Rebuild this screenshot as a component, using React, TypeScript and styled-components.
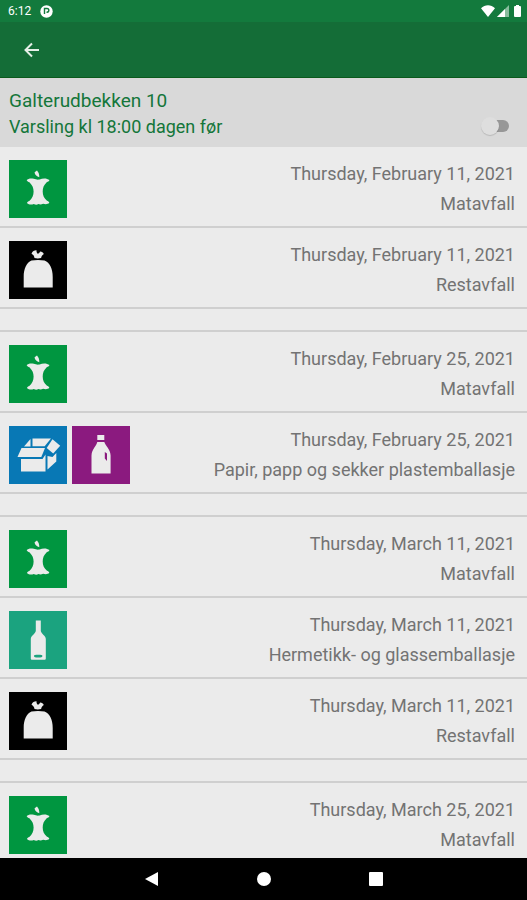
import * as React from 'react';
import styled, { createGlobalStyle } from 'styled-components';

type WasteKind = 'food' | 'rest' | 'paper' | 'plastic' | 'glass';

interface Pickup {
  date: string;
  label: string;
  kinds: WasteKind[];
}

const groups: Pickup[][] = [
  [
    { date: 'Thursday, February 11, 2021', label: 'Matavfall', kinds: ['food'] },
    { date: 'Thursday, February 11, 2021', label: 'Restavfall', kinds: ['rest'] },
  ],
  [
    { date: 'Thursday, February 25, 2021', label: 'Matavfall', kinds: ['food'] },
    {
      date: 'Thursday, February 25, 2021',
      label: 'Papir, papp og sekker plastemballasje',
      kinds: ['paper', 'plastic'],
    },
  ],
  [
    { date: 'Thursday, March 11, 2021', label: 'Matavfall', kinds: ['food'] },
    { date: 'Thursday, March 11, 2021', label: 'Hermetikk- og glassemballasje', kinds: ['glass'] },
    { date: 'Thursday, March 11, 2021', label: 'Restavfall', kinds: ['rest'] },
  ],
  [
    { date: 'Thursday, March 25, 2021', label: 'Matavfall', kinds: ['food'] },
  ],
];

const tileColors: Record<WasteKind, string> = {
  food: '#009640',
  rest: '#000000',
  paper: '#0878b5',
  plastic: '#8b1a7f',
  glass: '#1ba37f',
};

const GlobalStyle = createGlobalStyle`
  * {
    box-sizing: border-box;
  }
  body {
    margin: 0;
    font-family: Roboto, sans-serif;
    background: #ebebeb;
  }
`;

const Screen = styled.div`
  display: flex;
  flex-direction: column;
  height: 100vh;
  overflow: hidden;
`;

const StatusBar = styled.div`
  flex: none;
  display: flex;
  justify-content: space-between;
  align-items: center;
  height: 22px;
  padding: 0 4px 0 8px;
  background: #137a3d;
  color: #ffffff;
  font-size: 12px;
`;

const StatusGroup = styled.div<{ $gap: number }>`
  display: flex;
  align-items: center;
  gap: ${(p) => p.$gap}px;
`;

const AppBar = styled.header`
  flex: none;
  display: flex;
  align-items: center;
  height: 56px;
  padding: 0 20px;
  background: #146d37;
  border-bottom: 1px solid #0b5a1c;
`;

const IconButton = styled.button`
  display: flex;
  padding: 0;
  border: none;
  background: none;
  color: #e6efe8;
  cursor: pointer;
`;

const AddressBar = styled.section`
  flex: none;
  display: flex;
  justify-content: space-between;
  align-items: flex-end;
  padding: 10px 18px 8px 9px;
  background: #d9d9d9;
  color: #14763a;
`;

const Address = styled.h1`
  margin: 0;
  font-size: 19px;
  font-weight: 400;
  line-height: 26px;
`;

const AlertLabel = styled.label`
  display: block;
  font-size: 18px;
  line-height: 25px;
`;

const Toggle = styled.input`
  appearance: none;
  position: relative;
  width: 28px;
  height: 18px;
  margin: 0 0 4px;
  cursor: pointer;

  &::before {
    content: '';
    position: absolute;
    inset: 3px 0 3px 4px;
    border-radius: 6px;
    background: #979797;
  }
  &::after {
    content: '';
    position: absolute;
    top: 0;
    left: 0;
    width: 18px;
    height: 18px;
    border-radius: 50%;
    background: #dedede;
    box-shadow: 0 1px 1px rgba(0, 0, 0, 0.15);
  }
  &:checked::after {
    left: 10px;
    background: #14763a;
  }
`;

const Schedule = styled.main`
  flex: 1;
  min-height: 0;
  overflow: hidden;
`;

const PickupGroup = styled.ul`
  margin: 0;
  padding: 0;
  list-style: none;

  & + & {
    padding-top: 21px;
  }
  & + &::before {
    content: '';
    display: block;
    height: 2px;
    background: #cfcfcf;
  }
`;

const PickupRow = styled.li`
  display: flex;
  justify-content: space-between;
  align-items: flex-start;
  height: 81px;
  padding: 12px 12px 0 9px;
  border-bottom: 2px solid #cfcfcf;
`;

const Tiles = styled.div`
  display: flex;
  gap: 5px;
  padding-top: 1px;
`;

const Tile = styled.svg<{ $kind: WasteKind }>`
  width: 58px;
  height: 58px;
  background: ${(p) => tileColors[p.$kind]};
  fill: #ebebeb;
`;

const PickupText = styled.div`
  color: #737373;
  font-size: 18px;
  line-height: 30px;
  text-align: right;
`;

const NavBar = styled.nav`
  flex: none;
  display: flex;
  justify-content: center;
  align-items: center;
  gap: 98px;
  height: 42px;
  background: #000000;
`;

const drawings: Record<WasteKind, React.ReactNode> = {
  food: (
    <>
      <path d="M25.500 12.500c1-1 1.800-1.600 2.500-2 1.600 1.900 2.400 4 2.300 6.700-2.500-.7-4.200-2.200-4.800-4.700z" />
      <path d="M17.500 20.300c1.700-1.900 4.600-2.300 7.300-1.500 1.800.7 3.800 1.100 5.800.7 2.900-1.300 7-1.700 9.900.6-.5 1.300-1.500 1.900-2.800 2.100-2.900 2.800-4 5.700-4 9.400 0 4.100 1.400 7 4.300 9.100 1.100.3 2 .9 2.300 2-1.500 1.700-4 1.700-6.200 1-1.700 1-3.200 1-4.700.4-1.500.8-3.100.8-4.600-.2-2.500.9-5 .7-6.800-1 .3-1.100 1.200-1.700 2.300-2 2.900-2.300 4.300-5.200 4.300-9.300 0-3.700-1.300-6.600-4.200-9.400-1.200-.2-2.100-.8-2.600-1.900z" />
    </>
  ),
  rest: (
    <>
      <path d="M25.500 17c-.3-2.200-1.300-3.300-3-4.300 1-2.500 3-3.500 5-3.400-.1 1.600.3 2.600 1.300 3.500 1-.4 1.800-1.100 2.400-2.300 1.700.2 3 1 3.600 2.600-1.500 1-2.400 2.200-2.700 3.900-2.200.6-4.400.6-6.600 0z" />
      <path d="M22.500 19.600c4-.7 9-.7 13 0 5.400 2.200 8.200 8.400 8.200 16.200v10.700h-29V35.800c0-7.800 2.800-14 7.800-16.200z" />
    </>
  ),
  paper: (
    <>
      <path d="M15 20.500l6.500-7.500v7.500z" />
      <path d="M23.500 12.500h18.500l-6.300 7.700H23.500z" />
      <path d="M43.500 13.200l7.700 6.500-7 7.800-6.500-5.500z" />
      <path d="M12.500 22h23.500l-3.700 9H8.500z" />
      <path d="M12 33h21.500l3-4.500V45.500H12z" />
      <path d="M38.500 30l5 1 3.800-4v8.500l-8.800 8z" />
    </>
  ),
  plastic: (
    <>
      <path d="M25.300 9h7v5h-7z" />
      <path
        fillRule="evenodd"
        d="M25.300 16h7c1 3.300 6.200 7.500 6.300 13.500V47.500H19.500V29.500c.2-6 5.200-10 5.800-13.500zM32.800 26v6.500l2.200 2.500v-7.500z"
      />
    </>
  ),
  glass: (
    <path
      fillRule="evenodd"
      d="M26.800 9.500h5V20c.6 3.200 5 4.500 5 8v19.500c0 .8-.5 1.300-1.300 1.300H23.100c-.8 0-1.300-.5-1.300-1.300V28c0-3.500 4.400-4.800 5-8zM25 45c0 1 1.200 1.500 4.200 1.500s4.200-.5 4.200-1.500-1.200-1.200-4.200-1.200-4.200.2-4.200 1.200z"
    />
  ),
};

const WasteTile = ({ kind }: { kind: WasteKind }) => (
  <Tile $kind={kind} viewBox="0 0 58 58" aria-hidden="true">
    {drawings[kind]}
  </Tile>
);

const App = () => {
  const [notify, setNotify] = React.useState(false);

  return (
    <Screen>
      <GlobalStyle />
      <StatusBar>
        <StatusGroup $gap={9}>
          <span>6:12</span>
          <svg width="13" height="13" viewBox="0 0 13 13">
            <circle cx="6.500" cy="6.500" r="6.200" fill="#fff" />
            <path d="M4.500 9V3.500h2.500a1.800 1.800 0 0 1 0 3.700H6.500" fill="none" stroke="#137a3d" strokeWidth="1.400" />
          </svg>
        </StatusGroup>
        <StatusGroup $gap={2}>
          <svg width="14" height="12" viewBox="0 0 14 12" fill="#fff">
            <path d="M0 3.200C4-.8 10-.8 14 3.200L7 12z" />
          </svg>
          <svg width="12" height="12" viewBox="0 0 12 12">
            <path d="M12 0v12H0z" fill="#fff" fillOpacity="0.5" />
            <path d="M8 4v8H0z" fill="#fff" />
          </svg>
          <svg width="12" height="12" viewBox="0 0 12 12" fill="#fff">
            <path d="M5 0h3v1h1q1 0 1 1v9q0 1-1 1H4q-1 0-1-1V2q0-1 1-1h1z" />
          </svg>
        </StatusGroup>
      </StatusBar>

      <AppBar>
        <IconButton type="button" aria-label="Tilbake">
          <svg width="24" height="24" viewBox="0 0 24 24" fill="none" stroke="currentColor" strokeWidth="2">
            <path d="M19 12H6M12 5.500L5.500 12l6.500 6.500" />
          </svg>
        </IconButton>
      </AppBar>

      <AddressBar>
        <div>
          <Address>Galterudbekken 10</Address>
          <AlertLabel htmlFor="notify">Varsling kl 18:00 dagen før</AlertLabel>
        </div>
        <Toggle
          id="notify"
          type="checkbox"
          role="switch"
          checked={notify}
          onChange={(e) => setNotify(e.target.checked)}
        />
      </AddressBar>

      <Schedule>
        {groups.map((group, i) => (
          <PickupGroup key={i}>
            {group.map((pickup) => (
              <PickupRow key={pickup.label}>
                <Tiles>
                  {pickup.kinds.map((kind) => (
                    <WasteTile key={kind} kind={kind} />
                  ))}
                </Tiles>
                <PickupText>
                  <div>{pickup.date}</div>
                  <div>{pickup.label}</div>
                </PickupText>
              </PickupRow>
            ))}
          </PickupGroup>
        ))}
      </Schedule>

      <NavBar>
        <IconButton type="button" aria-label="Back">
          <svg width="14" height="14" viewBox="0 0 14 14" fill="#fff">
            <path d="M13 0v14L0 7z" />
          </svg>
        </IconButton>
        <IconButton type="button" aria-label="Home">
          <svg width="14" height="14" viewBox="0 0 14 14" fill="#fff">
            <circle cx="7" cy="7" r="7" />
          </svg>
        </IconButton>
        <IconButton type="button" aria-label="Overview">
          <svg width="14" height="14" viewBox="0 0 14 14" fill="#fff">
            <rect width="14" height="14" rx="1" />
          </svg>
        </IconButton>
      </NavBar>
    </Screen>
  );
};

export default App;
